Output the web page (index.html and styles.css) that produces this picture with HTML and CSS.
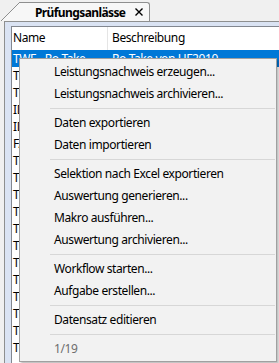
FILE: index.html
```html
<!DOCTYPE html>
<html lang="de">
<head>
<meta charset="UTF-8">
<title>Prüfungsanlässe</title>
<link rel="stylesheet" href="styles.css">
</head>
<body>
<div class="tabstrip">
  <div class="tab">
    <svg class="tab-slant" width="19" height="19" viewBox="0 0 19 19"><polygon points="0,19 19,0 19,19" fill="#f7f7f7"/><line x1="0" y1="19" x2="19" y2="0" stroke="#8e8f8f" stroke-width="1"/></svg>
    <div class="tab-body">
      <span class="tab-label">Prüfungsanlässe</span>
      <svg class="tab-close" width="8" height="8" viewBox="0 0 8 8"><path d="M0.5 0.5 L7.5 7.5 M7.5 0.5 L0.5 7.5" stroke="#000" stroke-width="1.4"/></svg>
    </div>
  </div>
</div>
<div class="frame">
  <div class="list">
    <div class="list-head">
      <div class="cell">Name</div>
      <div class="cell">Beschreibung</div>
    </div>
    <div class="row selected"><div class="cell">TWF - Ro Take</div><div class="cell">Ro Take von HF2010</div></div>
    <div class="row"><div class="cell">TWA - Ro Take</div><div class="cell">Ro Take von HF2011</div></div>
    <div class="row"><div class="cell">TWB - Ro Take</div><div class="cell">Ro Take von HF2012</div></div>
    <div class="row"><div class="cell">IDK - Prüfung</div><div class="cell">Prüfung Kasse</div></div>
    <div class="row"><div class="cell">IDM - Prüfung</div><div class="cell">Prüfung Material</div></div>
    <div class="row"><div class="cell">FAC - Abschluss</div><div class="cell">Jahresabschluss</div></div>
    <div class="row"><div class="cell">TWC - Ro Take</div><div class="cell">Ro Take von HF2013</div></div>
    <div class="row"><div class="cell">TWD - Ro Take</div><div class="cell">Ro Take von HF2014</div></div>
    <div class="row"><div class="cell">TWE - Ro Take</div><div class="cell">Ro Take von HF2015</div></div>
    <div class="row"><div class="cell">TWG - Ro Take</div><div class="cell">Ro Take von HF2016</div></div>
    <div class="row"><div class="cell">TWH - Ro Take</div><div class="cell">Ro Take von HF2017</div></div>
    <div class="row"><div class="cell">TWI - Ro Take</div><div class="cell">Ro Take von HF2018</div></div>
    <div class="row"><div class="cell">TWK - Ro Take</div><div class="cell">Ro Take von HF2019</div></div>
    <div class="row"><div class="cell">TWL - Ro Take</div><div class="cell">Ro Take von HF2020</div></div>
    <div class="row"><div class="cell">TWM - Ro Take</div><div class="cell">Ro Take von HF2021</div></div>
    <div class="row"><div class="cell">TWN - Ro Take</div><div class="cell">Ro Take von HF2022</div></div>
    <div class="row"><div class="cell">TWO - Ro Take</div><div class="cell">Ro Take von HF2023</div></div>
    <div class="row"><div class="cell">TWP - Ro Take</div><div class="cell">Ro Take von HF2024</div></div>
  </div>
</div>
<div class="menu">
  <div class="item">Leistungsnachweis erzeugen...</div>
  <div class="item">Leistungsnachweis archivieren...</div>
  <div class="sep"></div>
  <div class="item">Daten exportieren</div>
  <div class="item">Daten importieren</div>
  <div class="sep"></div>
  <div class="item">Selektion nach Excel exportieren</div>
  <div class="item">Auswertung generieren...</div>
  <div class="item">Makro ausführen...</div>
  <div class="item">Auswertung archivieren...</div>
  <div class="sep"></div>
  <div class="item">Workflow starten...</div>
  <div class="item">Aufgabe erstellen...</div>
  <div class="sep"></div>
  <div class="item">Datensatz editieren</div>
  <div class="sep"></div>
  <div class="item disabled">1/19</div>
</div>
</body>
</html>
```

FILE: styles.css
```css
html, body { height:100%; overflow:hidden; }
body { margin:0; background:#f0f0f0; font-family:"Noto Sans","Open Sans",sans-serif; font-size:12px; letter-spacing:-0.4px; color:#000; position:relative; }

/* Reiter oben */
.tabstrip { height:21px; display:flex; align-items:flex-end; padding-left:1px; }
.tab { display:flex; height:19px; }
.tab-slant { display:block; }
.tab-body { display:flex; align-items:center; height:18px; background:#f7f7f7; border-top:1px solid #8e8f8f; border-right:1px solid #8e8f8f; border-top-right-radius:3px; padding:0 6px 0 15px; }
.tab-label { font-weight:bold; letter-spacing:-0.6px; }
.tab-close { margin-left:10px; display:block; }

/* Rahmen + Liste */
.frame { margin-left:4px; border-top:1px solid #8e8f8f; border-left:1px solid #8e8f8f; background:#dae3f3; padding:4px 0 0 6px; height:calc(100% - 21px); box-sizing:border-box; }
.list { background:#fff; border-top:1px solid #828790; border-left:1px solid #828790; height:100%; box-sizing:border-box; overflow:hidden; }
.list-head { display:grid; grid-template-columns:95px 1fr; height:23px; }
.list-head .cell { line-height:21px; padding-left:1px; }
.list-head .cell + .cell { border-left:1px solid #e5e5e5; padding-left:4px; }
.row { display:grid; grid-template-columns:95px 1fr; height:17px; line-height:17px; white-space:nowrap; overflow:hidden; }
.row .cell { padding-left:1px; overflow:hidden; }
.row .cell + .cell { padding-left:5px; }
.row.selected { background:#0078d7; color:#fff; }

/* Kontextmenü */
.menu { position:absolute; left:19px; top:58px; width:258px; box-sizing:border-box; background:#f2f2f2; border:1px solid #a0a0a0; padding:2px 0 1px; box-shadow:2px 2px 2px rgba(0,0,0,.25); }
.item { height:22px; line-height:22px; padding-left:34px; white-space:nowrap; }
.item.disabled { color:#6d6d6d; }
.sep { margin:3px 1px 3px 30px; border-top:1px solid #d7d7d7; }
```
